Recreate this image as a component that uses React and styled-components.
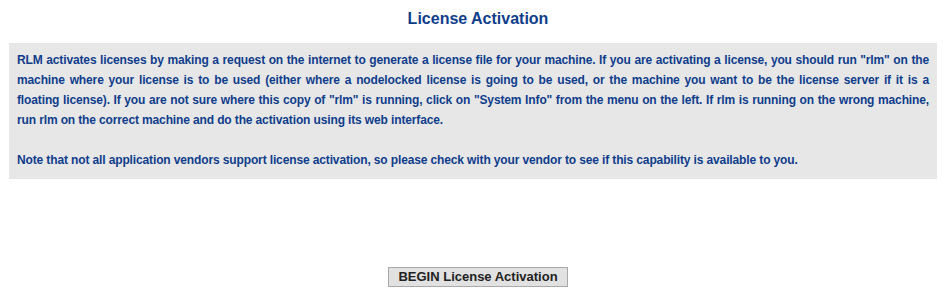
import React from "react";
import styled, { createGlobalStyle } from "styled-components";

const Global = createGlobalStyle`
  html, body { margin: 0; padding: 0; background: #ffffff; }
  body { font-family: "Liberation Sans", Arial, sans-serif; }
`;

const Page = styled.div`
  display: flex;
  flex-direction: column;
  width: 938px;
  margin-left: 9px;
  padding-top: 10px;
`;

const Title = styled.h1`
  margin: 0;
  font-size: 16px;
  line-height: 18px;
  font-weight: bold;
  color: #0f3d8c;
  text-align: center;
`;

const InfoBox = styled.div`
  margin-top: 15px;
  width: 928px;
  box-sizing: border-box;
  background: #e7e7e7;
  padding: 7px 8px 9px 8px;
`;

const Para = styled.p`
  margin: 0;
  font-size: 12px;
  line-height: 20px;
  font-weight: bold;
  letter-spacing: -0.13px;
  color: #0f3d8c;
  & + & { margin-top: 20px; }
`;

const Line = styled.span`
  display: block;
  white-space: nowrap;
  text-align: ${(p) => (p.$last ? "left" : "justify")};
  text-align-last: ${(p) => (p.$last ? "left" : "justify")};
`;

const ButtonRow = styled.div`
  display: flex;
  justify-content: center;
  margin-top: 88px;
`;

const Button = styled.button`
  width: 180px;
  height: 20px;
  padding: 0;
  background: #e1e1e1;
  border: 1px solid #a9a9a9;
  font-family: "Liberation Sans", Arial, sans-serif;
  font-size: 13px;
  font-weight: bold;
  color: #222222;
  line-height: 16px;
`;

const intro = [
  'RLM activates licenses by making a request on the internet to generate a license file for your machine. If you are activating a license, you should run "rlm" on the',
  "machine where your license is to be used (either where a nodelocked license is going to be used, or the machine you want to be the license server if it is a",
  'floating license). If you are not sure where this copy of "rlm" is running, click on "System Info" from the menu on the left. If rlm is running on the wrong machine,',
  "run rlm on the correct machine and do the activation using its web interface.",
];

export default function App() {
  return (
    <>
      <Global />
      <Page>
        <Title>License Activation</Title>
        <InfoBox>
          <Para>
            {intro.map((t, i) => (
              <Line key={i} $last={i === intro.length - 1}>
                {t}
              </Line>
            ))}
          </Para>
          <Para>
            <Line $last>
              Note that not all application vendors support license activation, so please check with your vendor to see if this capability is available to you.
            </Line>
          </Para>
        </InfoBox>
        <ButtonRow>
          <Button>BEGIN License Activation</Button>
        </ButtonRow>
      </Page>
    </>
  );
}
